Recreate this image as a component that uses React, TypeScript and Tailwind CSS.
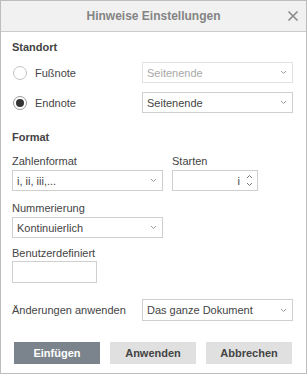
import React from "react";

const Chevron = () => (
  <svg width="7" height="5" viewBox="0 0 7 5" className="shrink-0">
    <polyline points="1,1 3.5,3.5 6,1" fill="none" stroke="#9a9a9a" strokeWidth="1" />
  </svg>
);

function Select({ text, w, disabled }: { text: string; w: string; disabled?: boolean }) {
  return (
    <div
      className={`${w} h-[21px] flex items-center justify-between pl-[4px] pr-[5px] border ${
        disabled ? "border-[#e2e2e2] text-[#a8a8a8]" : "border-[#cfcfcf] text-[#444]"
      } bg-white`}
    >
      <span className="leading-[14px]">{text}</span>
      <Chevron />
    </div>
  );
}

export default function App() {
  return (
    <div
      className="w-[307px] h-[374px] border border-[#bdbdbd] bg-white text-[11px] text-[#444] flex flex-col"
      style={{ fontFamily: '"Liberation Sans", Arial, sans-serif' }}
    >
      <div className="h-[31px] shrink-0 bg-[#f1f1f1] border-b border-[#cbcbcb] flex items-center justify-center relative">
        <span className="text-[12px] font-bold text-[#848484]">Hinweise Einstellungen</span>
        <svg className="absolute right-[7px] top-[9px]" width="12" height="12" viewBox="0 0 12 12">
          <path d="M1.5 1.5 L10.5 10.5 M10.5 1.5 L1.5 10.5" stroke="#8a8a8a" strokeWidth="1.6" />
        </svg>
      </div>
      <div className="pl-[11px] pt-[8px] flex flex-col">
        <div className="leading-[14px] font-bold">Standort</div>
        <div className="mt-[8px] flex items-center h-[21px]">
          <div className="w-[130px] flex items-center">
            <span className="w-[14px] h-[14px] rounded-full border border-[#c3c3c3] ml-[1px]" />
            <span className="ml-[8px] leading-[14px]">Fußnote</span>
          </div>
          <Select text="Seitenende" w="w-[151px]" disabled />
        </div>
        <div className="mt-[9px] flex items-center h-[21px]">
          <div className="w-[130px] flex items-center">
            <span className="w-[14px] h-[14px] rounded-full border border-[#9a9a9a] ml-[1px] flex items-center justify-center">
              <span className="w-[8px] h-[8px] rounded-full bg-[#333]" />
            </span>
            <span className="ml-[8px] leading-[14px]">Endnote</span>
          </div>
          <Select text="Seitenende" w="w-[151px]" />
        </div>
        <div className="mt-[17px] leading-[14px] font-bold">Format</div>
        <div className="mt-[10px] flex">
          <div className="w-[160px] flex flex-col">
            <div className="leading-[14px]">Zahlenformat</div>
            <div className="mt-[2px]">
              <Select text="i, ii, iii,..." w="w-[151px]" />
            </div>
          </div>
          <div className="flex flex-col">
            <div className="leading-[14px]">Starten</div>
            <div className="mt-[2px] w-[86px] h-[21px] border border-[#cfcfcf] flex items-center justify-end pr-[4px]">
              <span className="leading-[14px] mr-[6px]">i</span>
              <div className="flex flex-col items-center gap-[3px]">
                <svg width="7" height="5" viewBox="0 0 7 5">
                  <polyline points="1,4 3.5,1.5 6,4" fill="none" stroke="#777" strokeWidth="1" />
                </svg>
                <svg width="7" height="5" viewBox="0 0 7 5">
                  <polyline points="1,1 3.5,3.5 6,1" fill="none" stroke="#777" strokeWidth="1" />
                </svg>
              </div>
            </div>
          </div>
        </div>
        <div className="mt-[10px] leading-[14px]">Nummerierung</div>
        <div className="mt-[2px]">
          <Select text="Kontinuierlich" w="w-[151px]" />
        </div>
        <div className="mt-[8px] leading-[14px]">Benutzerdefiniert</div>
        <div className="mt-[1px] w-[85px] h-[22px] border border-[#cfcfcf]" />
        <div className="mt-[16px] flex items-center">
          <div className="w-[130px] leading-[14px]">Änderungen anwenden</div>
          <div className="[&>div]:h-[22px]">
            <Select text="Das ganze Dokument" w="w-[151px]" />
          </div>
        </div>
        <div className="mt-[21px] ml-[2px] flex gap-[10px]">
          <button className="w-[86px] h-[22px] bg-[#7b848c] text-white font-bold text-[11px]">Einfügen</button>
          <button className="w-[86px] h-[22px] bg-[#e0e0e0] text-[#444] font-bold text-[11px]">Anwenden</button>
          <button className="w-[86px] h-[22px] bg-[#e0e0e0] text-[#444] font-bold text-[11px]">Abbrechen</button>
        </div>
      </div>
    </div>
  );
}
